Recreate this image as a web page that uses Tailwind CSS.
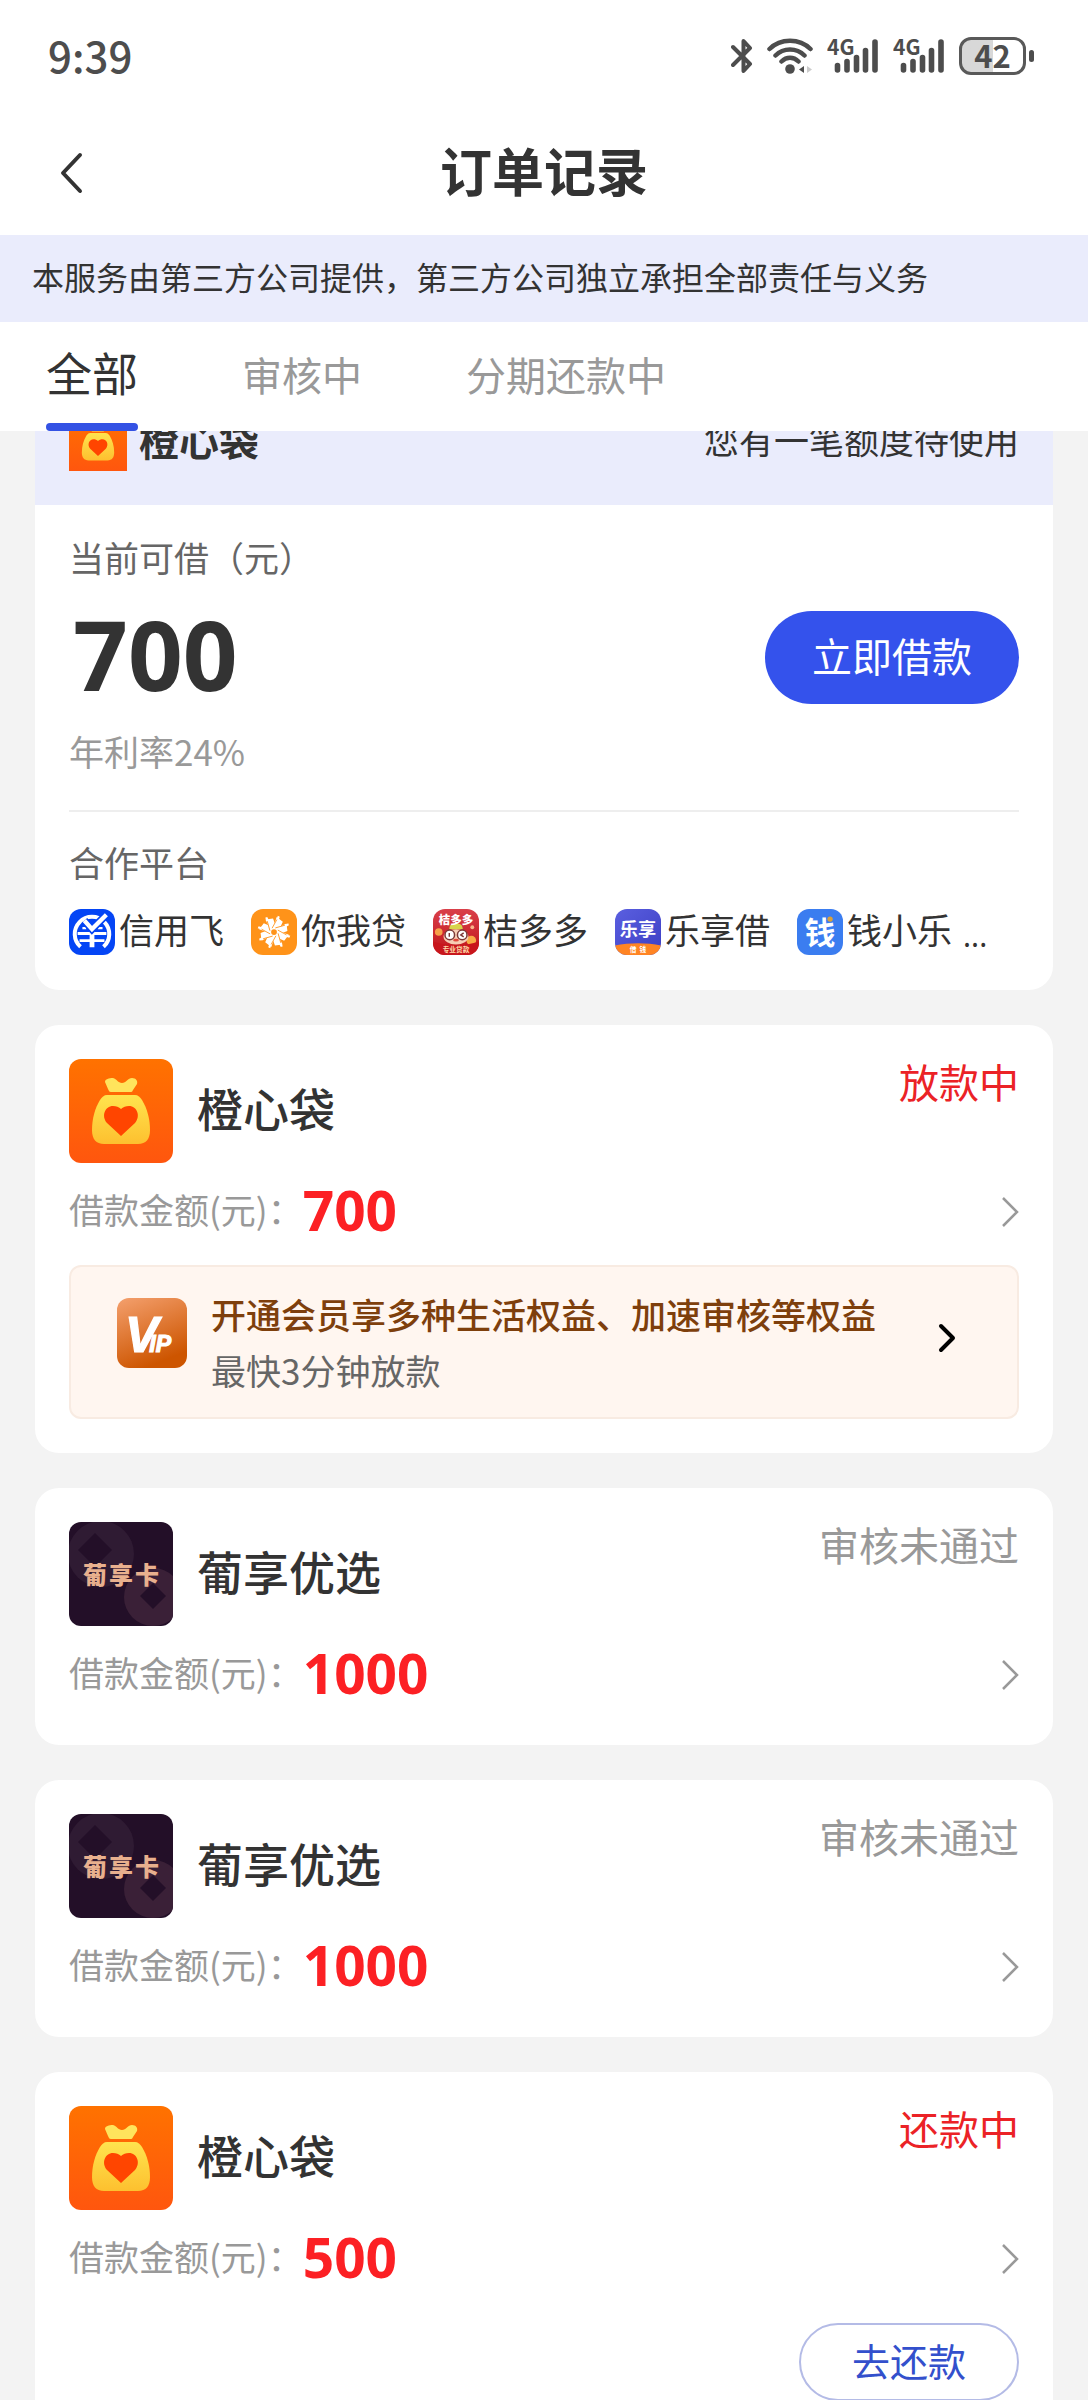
<!DOCTYPE html>
<html lang="zh-CN">
<head>
  <meta charset="UTF-8">
  <meta name="viewport" content="width=device-width, initial-scale=1.0">
  <title>订单记录</title>
  <script src="https://cdn.jsdelivr.net/npm/@tailwindcss/browser@4"></script>
</head>
<body class="h-screen overflow-hidden flex flex-col bg-[#f3f3f3] text-[#333] font-['Noto_Sans_CJK_SC',sans-serif]">

  <!-- ICONOS COMPARTIDOS -->
  <svg class="absolute w-0 h-0" aria-hidden="true">
    <defs>
      <linearGradient id="bolsaFondo" x1="0" y1="0" x2="0" y2="1">
        <stop offset="0" stop-color="#ff7200"/><stop offset="1" stop-color="#ff560e"/>
      </linearGradient>
      <linearGradient id="bolsaOro" x1="0" y1="0" x2="0" y2="1">
        <stop offset="0" stop-color="#ffe44e"/><stop offset="1" stop-color="#fdc02f"/>
      </linearGradient>
      <linearGradient id="vipFondo" x1="0" y1="0" x2="0.4" y2="1">
        <stop offset="0" stop-color="#f4a06e"/><stop offset="1" stop-color="#cd5500"/>
      </linearGradient>
      <linearGradient id="lexiangFondo" x1="0" y1="0" x2="1" y2="1">
        <stop offset="0" stop-color="#5a5fe0"/><stop offset="1" stop-color="#3d3fc4"/>
      </linearGradient>
      <linearGradient id="juziFondo" x1="0" y1="0" x2="0" y2="1">
        <stop offset="0" stop-color="#d9404a"/><stop offset="1" stop-color="#c01418"/>
      </linearGradient>
      <symbol id="bolsa" viewBox="0 0 104 104">
        <rect width="104" height="104" fill="url(#bolsaFondo)"/>
        <path fill="#ffe45c" d="M36 23c0-3 4-4 8-4 4 1 5 5 9 5s6-5 10-5c4 0 6 3 5 6l-4 6c-1 2-1 2-3 2H42c-2 0-2-1-3-3z"/>
        <path fill="url(#bolsaOro)" d="M38 36h28c3 0 5 2 7 5 5 8 8 19 8 30 0 9-4 14-12 14H35c-8 0-12-5-12-14 0-11 3-22 8-30 2-3 4-5 7-5z"/>
        <path fill="#ff4500" d="M52 77 38 64c-6-7-2-17 6-17 3 0 6 1 8 3 2-2 5-3 8-3 8 0 12 10 6 17z"/>
      </symbol>
      <symbol id="puxiang" viewBox="0 0 104 104">
        <rect width="104" height="104" fill="#230f28"/>
        <circle cx="32" cy="32" r="33" fill="#2f1b33"/>
        <path fill="#230f28" d="m26 11 17 17-17 17L9 28z"/>
        <circle cx="84" cy="75" r="29" fill="#3a2037"/>
        <path fill="#230f28" d="m84 61 13 13-13 13-13-13z"/>
        <g font-size="24" font-weight="900" fill="#e8b08e">
          <text x="14" y="62">葡</text>
          <text x="40" y="62">享</text>
          <text x="66" y="62">卡</text>
        </g>
      </symbol>
      <symbol id="flecha" viewBox="0 0 18 32">
        <path d="M2 2l14 14L2 30" fill="none" stroke="#999" stroke-width="2.5"/>
      </symbol>
      <symbol id="senal" viewBox="0 0 52 36">
        <text x="0" y="17" font-size="21" font-weight="700" fill="#4d4d4d">4G</text>
        <g stroke="#fff" stroke-width="9" stroke-linecap="round">
          <path d="M29.500 20V32M38.500 12.500V32"/>
        </g>
        <g stroke="#4d4d4d" stroke-width="5.6" stroke-linecap="round">
          <path d="M10.500 27.500V32M20 23.500V32M29.500 19.500V32M38.500 12.500V32M48 4V32"/>
        </g>
      </symbol>
    </defs>
  </svg>

  <!-- BARRA DE ESTADO -->
  <div class="bg-white h-[113px] shrink-0 flex items-center justify-between pl-12 pr-[54px] text-[#4d4d4d]">
    <span class="pb-1 text-[42px] leading-none font-medium">9:39</span>
    <div class="flex items-center gap-[14px] pb-0.5">
      <!-- bluetooth -->
      <svg class="w-[22px] h-9" viewBox="0 0 22 36" fill="none" stroke="#4d4d4d" stroke-width="4" stroke-linejoin="round" stroke-linecap="round">
        <path d="M2 9l17 17-6.500 7V3l6.500 7L2 27"/>
      </svg>
      <!-- wifi -->
      <svg class="w-[46px] h-9" viewBox="0 0 46 36" fill="none" stroke="#4d4d4d" stroke-width="4.500" stroke-linecap="round">
        <path d="M2.500 11c11-11 30-11 41 0M8.500 17.500c8-8 21-8 29 0M14.500 23.500c5-5 12-5 17 0"/>
        <circle cx="23" cy="31" r="4.800" fill="#4d4d4d" stroke="none"/>
        <path d="M37 28v7l-5-3.500z" fill="#4d4d4d" stroke="none"/>
        <path d="M40 28v7l5-3.500z" fill="#ccc" stroke="none"/>
      </svg>
      <svg class="w-[52px] h-9"><use href="#senal"/></svg>
      <svg class="w-[52px] h-9"><use href="#senal"/></svg>
      <!-- bateria -->
      <div class="flex items-center gap-[3px]">
        <div class="w-[67px] h-[38px] rounded-xl border-3 border-[#595959] bg-linear-to-r from-[#d8d8d8] from-50% to-white to-50% flex items-center justify-center pb-0.5 text-[31px] leading-none font-bold">42</div>
        <div class="w-[5px] h-3 rounded-full bg-[#4d4d4d]"></div>
      </div>
    </div>
  </div>

  <!-- CABECERA -->
  <header class="bg-white h-[122px] shrink-0 grid grid-cols-[120px_1fr_120px] items-center">
    <button class="h-full pb-0.5 pl-[60px]" aria-label="返回">
      <svg class="w-6 h-11" viewBox="0 0 24 44" fill="none" stroke="#333" stroke-width="4" stroke-linecap="round" stroke-linejoin="round"><path d="M20 4L3 22l17 18"/></svg>
    </button>
    <h1 class="pb-2 text-center text-[52px] leading-none font-bold">订单记录</h1>
  </header>

  <p class="bg-[#eaecfc] h-[87px] shrink-0 flex items-center px-8 pb-1.5 text-[32px] leading-none whitespace-nowrap">本服务由第三方公司提供，第三方公司独立承担全部责任与义务</p>

  <!-- PESTAÑAS -->
  <nav class="bg-white h-[109px] shrink-0 flex items-stretch gap-[104px] px-[46px]">
    <button class="relative pb-3 text-[46px] leading-none">全部
      <span class="absolute inset-x-0 bottom-0 h-2 rounded-full bg-[#3452e4]"></span>
    </button>
    <button class="pb-1.5 text-[40px] leading-none text-[#999]">审核中</button>
    <button class="pb-1.5 text-[40px] leading-none text-[#999]">分期还款中</button>
  </nav>

  <!-- LISTA -->
  <main class="flex-1 min-h-0 overflow-hidden px-[35px] flex flex-col gap-[35px]">

    <!-- Oferta -->
    <section class="-mt-[53px] shrink-0 bg-white rounded-3xl overflow-hidden">
      <div class="bg-[#eaecfc] h-[127px] px-[34px] flex items-center">
        <svg class="w-[58px] h-[58px]"><use href="#bolsa"/></svg>
        <h2 class="ml-3 pb-1.5 text-[40px] leading-none font-bold">橙心袋</h2>
        <span class="ml-auto pb-1.5 text-[35px] leading-none">您有一笔额度待使用</span>
      </div>
      <div class="px-[34px] pt-8 pb-[35px]">
        <p class="text-[35px] leading-[40px] text-[#666]">当前可借（元）</p>
        <div class="mt-[34px] flex items-center justify-between">
          <span class="pl-1 pb-2 text-[96px] leading-[85px] font-bold font-['Noto_Sans']">700</span>
          <button class="w-[254px] h-[93px] pb-1.5 rounded-full bg-[#3452ec] text-white text-[40px] leading-none">立即借款</button>
        </div>
        <p class="mt-[27px] text-[35px] leading-[40px] text-[#999]">年利率24%</p>
        <div class="mt-[39px] border-t-2 border-[#eee]"></div>
        <p class="mt-[30px] text-[35px] leading-[40px] text-[#666]">合作平台</p>
        <div class="mt-[27px] flex items-center gap-[27px] text-[35px] leading-[40px]">
          <div class="flex items-center gap-1">
            <svg class="w-[46px] h-[46px] rounded-xl" viewBox="0 0 48 48">
              <rect width="48" height="48" fill="#0445f5"/>
              <g fill="none" stroke="#fff">
                <path d="M12 39.500A18 18 0 1 1 36 39.500" stroke-width="4.200"/>
                <path d="M9 25.500h30M11 33h26" stroke-width="3"/>
                <path d="M24 22v18" stroke-width="5"/>
                <path d="M14 20l4 0M30 20h5" stroke-width="2.500"/>
              </g>
              <path d="M16 12l8 9L40 5" fill="none" stroke="#0445f5" stroke-width="8"/>
              <path d="M16 12l8 9L39 6" fill="none" stroke="#fff" stroke-width="4.500"/>
            </svg>
            <span class="pb-1.5">信用飞</span>
          </div>
          <div class="flex items-center gap-1">
            <svg class="w-[46px] h-[46px] rounded-xl" viewBox="0 0 48 48">
              <rect width="48" height="48" fill="#ff9319"/>
              <!-- aspas giradas alrededor del centro -->
              <circle cx="24" cy="24" r="9" fill="#fff"/>
              <g fill="#fff">
                <path id="aspa" d="M20 21L15 11l8-1 3 8zM25 16l3-9 2 1-3 10z"/>
                <use href="#aspa" transform="rotate(45 24 24)"/>
                <use href="#aspa" transform="rotate(90 24 24)"/>
                <use href="#aspa" transform="rotate(135 24 24)"/>
                <use href="#aspa" transform="rotate(180 24 24)"/>
                <use href="#aspa" transform="rotate(225 24 24)"/>
                <use href="#aspa" transform="rotate(270 24 24)"/>
                <use href="#aspa" transform="rotate(315 24 24)"/>
              </g>
              <g fill="none" stroke="#ff9319" stroke-width="0.900">
                <path id="corte" d="M22 20l5-9"/>
                <use href="#corte" transform="rotate(45 24 24)"/>
                <use href="#corte" transform="rotate(90 24 24)"/>
                <use href="#corte" transform="rotate(135 24 24)"/>
                <use href="#corte" transform="rotate(180 24 24)"/>
                <use href="#corte" transform="rotate(225 24 24)"/>
                <use href="#corte" transform="rotate(270 24 24)"/>
                <use href="#corte" transform="rotate(315 24 24)"/>
              </g>
              <circle cx="24" cy="24" r="3" fill="#ff9319"/>
            </svg>
            <span class="pb-1.5">你我贷</span>
          </div>
          <div class="flex items-center gap-1">
            <svg class="w-[46px] h-[46px] rounded-xl" viewBox="0 0 48 48">
              <rect width="48" height="48" fill="url(#juziFondo)"/>
              <circle cx="6" cy="24" r="4" fill="#f6a14a"/>
              <circle cx="40" cy="33" r="5" fill="#f8ab45"/>
              <circle cx="41" cy="19" r="2" fill="#f8b88a"/>
              <ellipse cx="24" cy="29" rx="13" ry="8" fill="#f7cdb4"/>
              <path d="M17 21c0-5 3-6 7-6s7 1 7 6z" fill="#d8d34c"/>
              <circle cx="17.500" cy="27" r="5" fill="#fff" stroke="#7c3a38" stroke-width="1.600"/>
              <circle cx="30.500" cy="27" r="5" fill="#fff" stroke="#7c3a38" stroke-width="1.600"/>
              <path d="M32 25l-3 2 3 2M17 25v4" fill="none" stroke="#7c3a38" stroke-width="1.500"/>
              <ellipse cx="24" cy="32.500" rx="3" ry="1.500" fill="#e24a3c"/>
              <path d="M0 34c14 5 34 5 48 0v14H0z" fill="#c8161c"/>
              <text x="24" y="15.500" text-anchor="middle" font-size="12" font-weight="900" fill="#fff">桔多多</text>
              <text x="24" y="45" text-anchor="middle" font-size="7" font-weight="700" fill="#ffd9a8">专业贷款</text>
            </svg>
            <span class="pb-1.5">桔多多</span>
          </div>
          <div class="flex items-center gap-1">
            <svg class="w-[46px] h-[46px] rounded-xl" viewBox="0 0 48 48">
              <rect width="48" height="48" fill="url(#lexiangFondo)"/>
              <path d="M0 38c15-3 33-3 48 0v10H0z" fill="#ff8423"/>
              <text x="24" y="28" text-anchor="middle" font-size="19" font-weight="700" fill="#fff">乐享</text>
              <text x="19" y="45" text-anchor="middle" font-size="7" font-weight="700" fill="#fff">借</text>
              <text x="29" y="45" text-anchor="middle" font-size="7" font-weight="700" fill="#fff">钱</text>
            </svg>
            <span class="pb-1.5">乐享借</span>
          </div>
          <div class="flex items-center gap-1">
            <svg class="w-[46px] h-[46px] rounded-xl" viewBox="0 0 48 48">
              <rect width="48" height="48" fill="#3b7df0"/>
              <text x="24" y="36" text-anchor="middle" font-size="32" font-weight="700" fill="#fff">钱</text>
              <circle cx="34.500" cy="10.500" r="4" fill="#3b7df0"/>
              <circle cx="34.500" cy="10.500" r="2.800" fill="#d9a13a"/>
            </svg>
            <span class="pb-1.5">钱小乐</span>
          </div>
          <span class="-ml-4 pb-1 self-end text-[30px] leading-none font-['Noto_Sans']">...</span>
        </div>
      </div>
    </section>

    <!-- Pedido 1 -->
    <article class="shrink-0 bg-white rounded-3xl px-[34px] pt-[34px] pb-[34px]">
      <div class="flex items-center">
        <svg class="w-[104px] h-[104px] rounded-xl"><use href="#bolsa"/></svg>
        <h2 class="ml-6 pb-2 text-[46px] leading-none font-medium">橙心袋</h2>
        <span class="ml-auto self-start text-[40px] leading-[44px] text-[#eb2226]">放款中</span>
      </div>
      <a href="#" class="h-[92px] flex items-center">
        <span class="pb-0.5 text-[35px] leading-none text-[#999]">借款金额(元)：</span>
        <strong class="text-[55px] leading-none font-bold font-['Noto_Sans'] text-[#fc2024]">700</strong>
        <svg class="ml-auto mt-1.5 w-[18px] h-8"><use href="#flecha"/></svg>
      </a>
      <a href="#" class="mt-[10px] h-[154px] flex items-center rounded-xl border-2 border-[#f8ebe2] bg-[#fff6f0] pl-[46px] pr-[60px]">
        <svg class="w-[70px] h-[70px] rounded-xl self-start mt-[31px]" viewBox="0 0 70 70">
          <rect width="70" height="70" fill="url(#vipFondo)"/>
          <text x="8" y="54" fill="#fff" stroke="#fff" stroke-width="1.200" font-weight="700" font-style="italic" font-family="'Liberation Sans'"><tspan font-size="50">V</tspan><tspan dx="-9" font-size="23">IP</tspan></text>
        </svg>
        <div class="ml-6">
          <p class="text-[35px] leading-[56px] font-medium text-[#7e3f0c] whitespace-nowrap">开通会员享多种生活权益、加速审核等权益</p>
          <p class="text-[35px] leading-[56px] text-[#666]">最快3分钟放款</p>
        </div>
        <svg class="ml-auto mb-2 w-5 h-8" viewBox="0 0 20 32" fill="none" stroke="#000" stroke-width="4" stroke-linecap="round" stroke-linejoin="round"><path d="M4 4l12 12L4 28"/></svg>
      </a>
    </article>

    <!-- Pedido 2 -->
    <article class="shrink-0 bg-white rounded-3xl px-[34px] pt-[34px] pb-[27px]">
      <div class="flex items-center">
        <svg class="w-[104px] h-[104px] rounded-xl"><use href="#puxiang"/></svg>
        <h2 class="ml-6 pb-2 text-[46px] leading-none font-medium">葡享优选</h2>
        <span class="ml-auto self-start text-[40px] leading-[44px] text-[#999]">审核未通过</span>
      </div>
      <a href="#" class="h-[92px] flex items-center">
        <span class="pb-0.5 text-[35px] leading-none text-[#999]">借款金额(元)：</span>
        <strong class="text-[55px] leading-none font-bold font-['Noto_Sans'] text-[#fc2024]">1000</strong>
        <svg class="ml-auto mt-1.5 w-[18px] h-8"><use href="#flecha"/></svg>
      </a>
    </article>

    <!-- Pedido 3 -->
    <article class="shrink-0 bg-white rounded-3xl px-[34px] pt-[34px] pb-[27px]">
      <div class="flex items-center">
        <svg class="w-[104px] h-[104px] rounded-xl"><use href="#puxiang"/></svg>
        <h2 class="ml-6 pb-2 text-[46px] leading-none font-medium">葡享优选</h2>
        <span class="ml-auto self-start text-[40px] leading-[44px] text-[#999]">审核未通过</span>
      </div>
      <a href="#" class="h-[92px] flex items-center">
        <span class="pb-0.5 text-[35px] leading-none text-[#999]">借款金额(元)：</span>
        <strong class="text-[55px] leading-none font-bold font-['Noto_Sans'] text-[#fc2024]">1000</strong>
        <svg class="ml-auto mt-1.5 w-[18px] h-8"><use href="#flecha"/></svg>
      </a>
    </article>

    <!-- Pedido 4 -->
    <article class="shrink-0 bg-white rounded-3xl px-[34px] pt-[34px] pb-[34px]">
      <div class="flex items-center">
        <svg class="w-[104px] h-[104px] rounded-xl"><use href="#bolsa"/></svg>
        <h2 class="ml-6 pb-2 text-[46px] leading-none font-medium">橙心袋</h2>
        <span class="ml-auto self-start text-[40px] leading-[44px] text-[#eb2226]">还款中</span>
      </div>
      <a href="#" class="h-[92px] flex items-center">
        <span class="pb-0.5 text-[35px] leading-none text-[#999]">借款金额(元)：</span>
        <strong class="text-[55px] leading-none font-bold font-['Noto_Sans'] text-[#fc2024]">500</strong>
        <svg class="ml-auto mt-1.5 w-[18px] h-8"><use href="#flecha"/></svg>
      </a>
      <div class="mt-[21px] flex justify-end">
        <button class="w-[220px] h-[78px] pb-1 rounded-full border-2 border-[#b4bbe6] text-[38px] leading-none text-[#3350cc]">去还款</button>
      </div>
    </article>
  </main>

</body>
</html>
